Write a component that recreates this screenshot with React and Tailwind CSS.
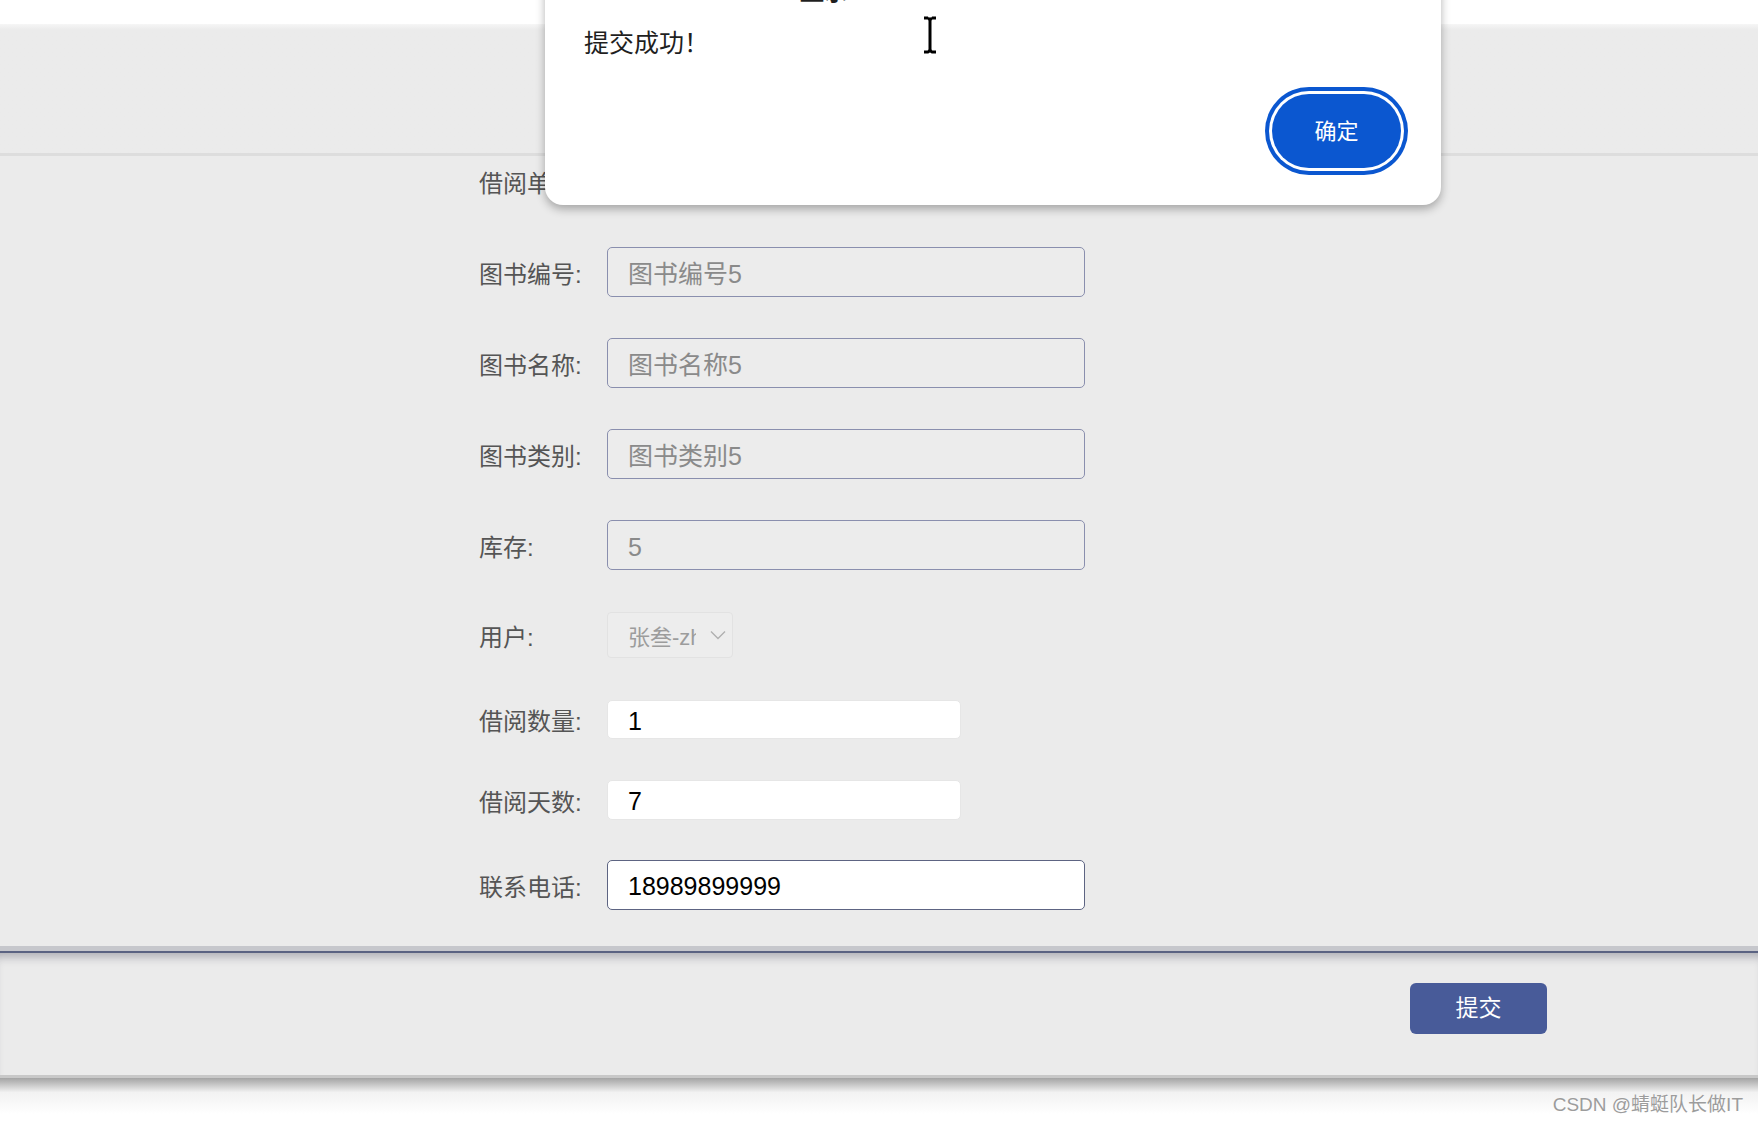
import React from 'react';

const cjk = { fontFamily: '"Liberation Sans", "Noto Sans CJK SC", sans-serif' };

function Label({ children }) {
  return (
    <div className="w-[128px] shrink-0 pt-[5px] text-[24px] leading-none text-[#555]">{children}</div>
  );
}

function ReadonlyInput({ value, className = 'h-[50px]' }) {
  return (
    <div className={`flex w-[478px] items-center rounded-[5px] border border-[#8a8fae] bg-[#ececec] pl-[20px] pt-[5px] text-[25px] text-[#8a8a8a] ${className}`}>
      {value}
    </div>
  );
}

function Row({ label, children, className = '' }) {
  return (
    <div className={`flex items-center ${className}`}>
      <Label>{label}</Label>
      {children}
    </div>
  );
}

export default function App() {
  return (
    <div className="relative h-[1124px] w-[1758px] overflow-hidden bg-white" style={cjk}>
      {/* top strip */}
      <div className="h-[24px] bg-white" />
      <div className="h-[132px] bg-gradient-to-b from-[#f6f6f6] to-[#ebebeb] to-[6px] border-b-[3px] border-[#dddddd]" />

      {/* form */}
      <div className="bg-[#ebebeb] pl-[479px] pb-[36px]">
        <Row label="借阅单号:" className="h-[50px]">
          <ReadonlyInput value="202305" className="h-[40px]" />
        </Row>
        <Row label="图书编号:" className="mt-[41px] h-[50px]">
          <ReadonlyInput value="图书编号5" />
        </Row>
        <Row label="图书名称:" className="mt-[41px] h-[50px]">
          <ReadonlyInput value="图书名称5" />
        </Row>
        <Row label="图书类别:" className="mt-[41px] h-[50px]">
          <ReadonlyInput value="图书类别5" />
        </Row>
        <Row label="库存:" className="mt-[41px] h-[50px]">
          <ReadonlyInput value="5" />
        </Row>
        <Row label="用户:" className="mt-[42px] h-[46px]">
          <div className="flex h-[46px] w-[126px] items-center rounded-[4px] border border-[#e2e2e2] bg-[#ededed] pl-[20px]">
            <div className="w-[68px] overflow-hidden whitespace-nowrap pt-[4px] text-[22px] text-[#9c9c9c]">张叁-zhangsan</div>
            <svg width="16" height="10" viewBox="0 0 16 10" className="ml-[14px]">
              <path d="M1 1.5 L8 8.5 L15 1.5" fill="none" stroke="#b0b0b0" strokeWidth="1.4" />
            </svg>
          </div>
        </Row>
        <Row label="借阅数量:" className="mt-[42px] h-[39px]">
          <div className="flex h-[39px] w-[354px] items-center rounded-[5px] border border-[#e6e6e6] bg-white pl-[20px] pt-[4px] text-[25px] text-black">1</div>
        </Row>
        <Row label="借阅天数:" className="mt-[41px] h-[40px]">
          <div className="flex h-[40px] w-[354px] items-center rounded-[5px] border border-[#e6e6e6] bg-white pl-[20px] pt-[4px] text-[25px] text-black">7</div>
        </Row>
        <Row label="联系电话:" className="mt-[40px] h-[50px]">
          <div className="flex h-[50px] w-[478px] items-center rounded-[5px] border border-[#5d6482] bg-white pl-[20px] pt-[4px] text-[25px] text-black">18989899999</div>
        </Row>
      </div>

      {/* footer */}
      <div className="h-[5px] bg-[#c6c7cc]" />
      <div className="h-[2px] bg-[#5b6382]" />
      <div className="flex h-[122px] items-start justify-end bg-[#ebebeb] pr-[211px] pt-[30px] shadow-[inset_0_10px_10px_-6px_rgba(60,60,80,0.35)]">
        <button className="h-[51px] w-[137px] rounded-[6px] bg-[#485b99] text-[23px] text-white">提交</button>
      </div>
      <div className="h-[3px] bg-[#c8c8c8]" />
      <div className="flex h-[36px] items-end justify-end bg-gradient-to-b from-[#a4a4a4] via-[#f2f2f2] via-[40%] to-white pr-[15px]">
        <span className="text-[19px] leading-none text-[#9c9c9c] [text-shadow:0_1px_0_#ffffff]">CSDN @蜻蜓队长做IT</span>
      </div>

      {/* alert dialog */}
      <div className="absolute left-[545px] top-[-60px] h-[265px] w-[896px] rounded-[18px] bg-white shadow-[0_4px_10px_rgba(0,0,0,0.3)]">
        <div className="absolute left-[255px] top-[40px] text-[24px] font-bold leading-[24px] text-[#1f1f1f]">显示</div>
        <div className="absolute left-[39px] top-[88px] text-[25px] leading-[30px] text-[#1f1f1f]">提交成功！</div>
        <button className="absolute right-[40px] top-[154px] h-[74px] w-[129px] rounded-full bg-[#0b57d0] text-[22px] text-white shadow-[0_0_0_3px_#ffffff,0_0_0_7px_#0b57d0]">
          确定
        </button>
      </div>

      {/* text cursor */}
      <svg className="absolute left-[922px] top-[16px]" width="16" height="38" viewBox="0 0 16 38">
        <path d="M2 2 H6 M10 2 H14 M6 2 Q8 3 8 5 V33 Q8 35 6 36 H2 M10 2 Q8 3 8 5 M8 33 Q8 35 10 36 H14" fill="none" stroke="#000" strokeWidth="3" />
      </svg>
    </div>
  );
}
